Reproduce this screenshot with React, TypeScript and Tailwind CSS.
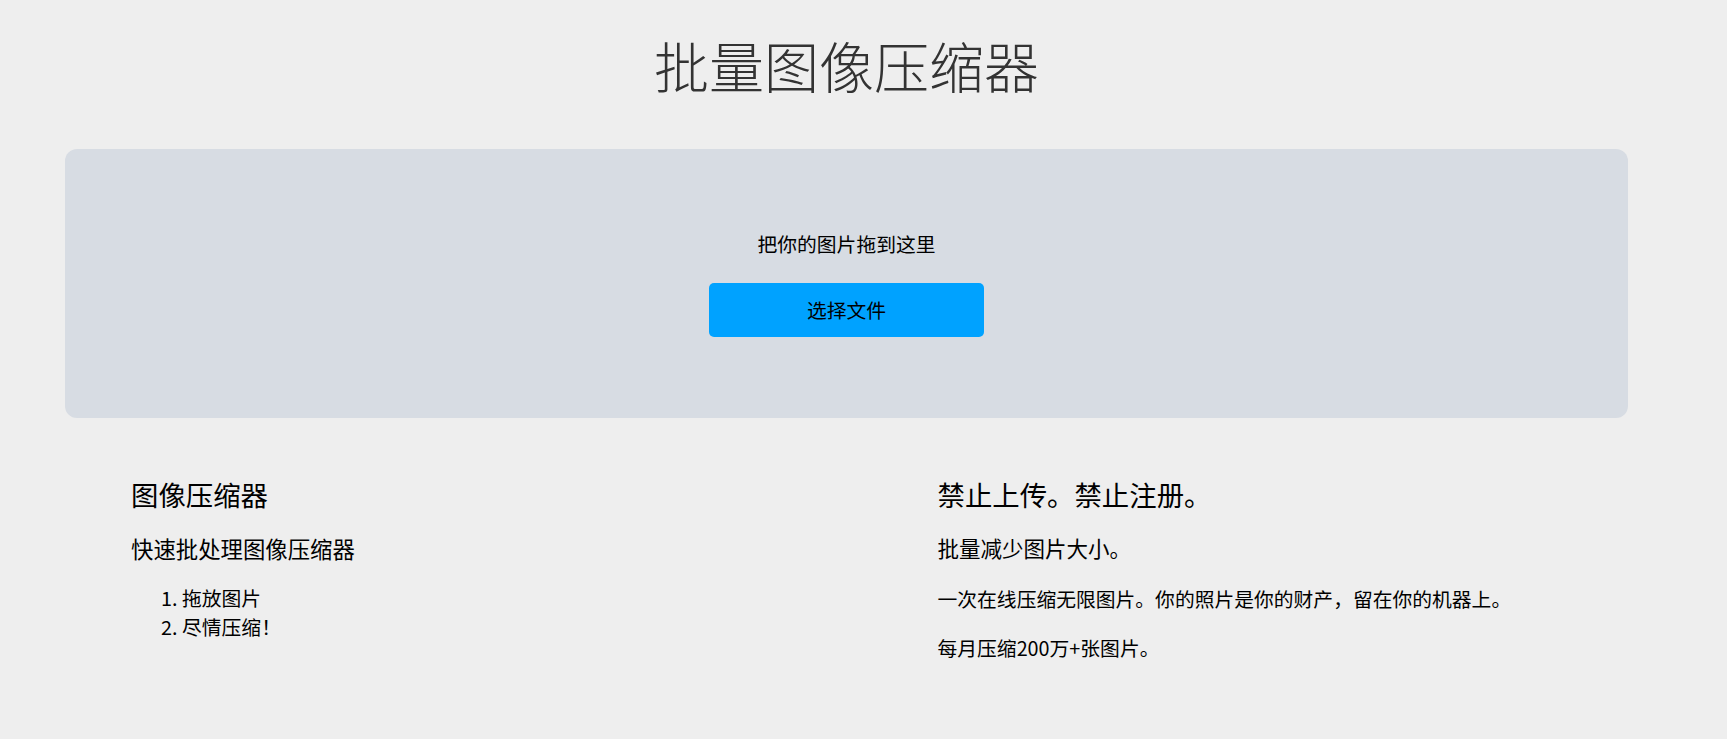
export default function App() {
  return (
    <div
      className="min-h-[739px] w-full bg-[#eeeeee] pr-[34px] text-black"
      style={{ fontFamily: '"Noto Sans CJK SC", "Noto Sans", sans-serif' }}
    >
      <h1 className="pt-[31px] text-center text-[55px] leading-[66px] font-light text-[#333333]">
        批量图像压缩器
      </h1>

      {/* drop zone */}
      <div className="mx-[65px] mt-[52px] flex flex-col items-center rounded-[12px] bg-[#d7dce3] pt-[81px] pb-[81px]">
        <p className="text-[19.8px] leading-[28px]">把你的图片拖到这里</p>
        <button
          type="button"
          className="mt-[25px] flex h-[54px] w-[275px] items-center justify-center rounded-[5px] bg-[#00a2ff] text-[19.8px] text-black"
        >
          选择文件
        </button>
      </div>

      <div className="mx-[65px] mt-[58px] grid grid-cols-2">
        <div className="pl-[66px]">
          <h2 className="text-[27.4px] leading-[36px]">图像压缩器</h2>
          <h3 className="mt-[21px] text-[22.4px] leading-[30px]">快速批处理图像压缩器</h3>
          <ol className="mt-[21px] list-decimal pl-[51px] text-[19.8px] leading-[28.5px]">
            <li>拖放图片</li>
            <li>尽情压缩！</li>
          </ol>
        </div>
        <div className="pl-[91px]">
          <h2 className="text-[27.4px] leading-[36px]">禁止上传。禁止注册。</h2>
          <p className="mt-[21px] text-[21.5px] leading-[30px]">批量减少图片大小。</p>
          <p className="mt-[21px] text-[19.8px] leading-[30px]">
            一次在线压缩无限图片。你的照片是你的财产，留在你的机器上。
          </p>
          <p className="mt-[19px] text-[19.8px] leading-[30px]">每月压缩200万+张图片。</p>
        </div>
      </div>
    </div>
  );
}
